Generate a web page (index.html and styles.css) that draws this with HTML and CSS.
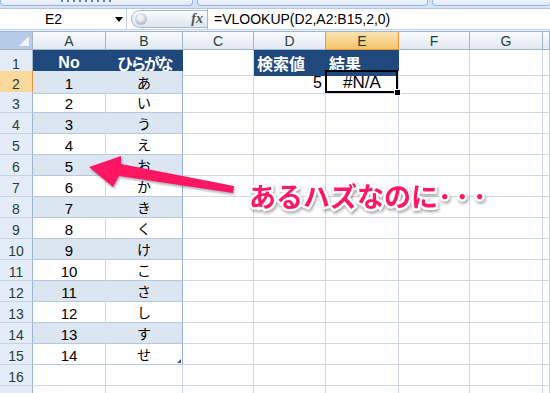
FILE: index.html
```html
<!DOCTYPE html>
<html lang="ja">
<head>
<meta charset="utf-8">
<link rel="stylesheet" href="styles.css">
</head>
<body>
<div class="ribbon">
  <div class="rb rb1"><span class="dots"></span></div>
  <div class="rb rb2"></div>
  <div class="rb rb3"></div>
</div>
<div class="fbar">
  <div class="namebox"><span class="nm">E2</span><span class="dd"></span></div>
  <div class="pill"><span class="knob"></span><span class="fx">fx</span></div>
  <div class="formula">=VLOOKUP(D2,A2:B15,2,0)</div>
</div>
<div class="gap"></div>
<div class="sheet">
  <div class="row colhdr">
    <div class="corner"><span class="tri"></span></div>
    <div class="ch">A</div><div class="ch">B</div><div class="ch">C</div><div class="ch">D</div>
    <div class="ch hsel">E</div><div class="ch">F</div><div class="ch">G</div><div class="ch"></div>
  </div>
  <div class="row">
    <div class="rh">1</div>
    <div class="c th">No</div><div class="c th kana-h">ひらがな</div><div class="c"></div>
    <div class="c th left">検索値</div><div class="c th left">結果</div><div class="c"></div><div class="c"></div><div class="c"></div>
  </div>
  <div class="row">
    <div class="rh rsel">2</div>
    <div class="c ta band">1</div><div class="c tb band">あ</div><div class="c"></div>
    <div class="c num">5</div><div class="c active">#N/A</div><div class="c"></div><div class="c"></div><div class="c"></div>
  </div>
  <div class="row">
    <div class="rh">3</div>
    <div class="c ta">2</div><div class="c tb">い</div><div class="c"></div><div class="c"></div><div class="c"></div><div class="c"></div><div class="c"></div><div class="c"></div>
  </div>
  <div class="row">
    <div class="rh">4</div>
    <div class="c ta band">3</div><div class="c tb band">う</div><div class="c"></div><div class="c"></div><div class="c"></div><div class="c"></div><div class="c"></div><div class="c"></div>
  </div>
  <div class="row">
    <div class="rh">5</div>
    <div class="c ta">4</div><div class="c tb">え</div><div class="c"></div><div class="c"></div><div class="c"></div><div class="c"></div><div class="c"></div><div class="c"></div>
  </div>
  <div class="row">
    <div class="rh">6</div>
    <div class="c ta band">5</div><div class="c tb band">お</div><div class="c"></div><div class="c"></div><div class="c"></div><div class="c"></div><div class="c"></div><div class="c"></div>
  </div>
  <div class="row">
    <div class="rh">7</div>
    <div class="c ta">6</div><div class="c tb">か</div><div class="c"></div><div class="c"></div><div class="c"></div><div class="c"></div><div class="c"></div><div class="c"></div>
  </div>
  <div class="row">
    <div class="rh">8</div>
    <div class="c ta band">7</div><div class="c tb band">き</div><div class="c"></div><div class="c"></div><div class="c"></div><div class="c"></div><div class="c"></div><div class="c"></div>
  </div>
  <div class="row">
    <div class="rh">9</div>
    <div class="c ta">8</div><div class="c tb">く</div><div class="c"></div><div class="c"></div><div class="c"></div><div class="c"></div><div class="c"></div><div class="c"></div>
  </div>
  <div class="row">
    <div class="rh">10</div>
    <div class="c ta band">9</div><div class="c tb band">け</div><div class="c"></div><div class="c"></div><div class="c"></div><div class="c"></div><div class="c"></div><div class="c"></div>
  </div>
  <div class="row">
    <div class="rh">11</div>
    <div class="c ta">10</div><div class="c tb">こ</div><div class="c"></div><div class="c"></div><div class="c"></div><div class="c"></div><div class="c"></div><div class="c"></div>
  </div>
  <div class="row">
    <div class="rh">12</div>
    <div class="c ta band">11</div><div class="c tb band">さ</div><div class="c"></div><div class="c"></div><div class="c"></div><div class="c"></div><div class="c"></div><div class="c"></div>
  </div>
  <div class="row">
    <div class="rh">13</div>
    <div class="c ta">12</div><div class="c tb">し</div><div class="c"></div><div class="c"></div><div class="c"></div><div class="c"></div><div class="c"></div><div class="c"></div>
  </div>
  <div class="row">
    <div class="rh">14</div>
    <div class="c ta band">13</div><div class="c tb band">す</div><div class="c"></div><div class="c"></div><div class="c"></div><div class="c"></div><div class="c"></div><div class="c"></div>
  </div>
  <div class="row">
    <div class="rh">15</div>
    <div class="c ta">14</div><div class="c tb last">せ</div><div class="c"></div><div class="c"></div><div class="c"></div><div class="c"></div><div class="c"></div><div class="c"></div>
  </div>
  <div class="row">
    <div class="rh">16</div>
    <div class="c"></div><div class="c"></div><div class="c"></div><div class="c"></div><div class="c"></div><div class="c"></div><div class="c"></div><div class="c"></div>
  </div>
  <div class="row">
    <div class="rh"></div>
    <div class="c"></div><div class="c"></div><div class="c"></div><div class="c"></div><div class="c"></div><div class="c"></div><div class="c"></div><div class="c"></div>
  </div>
</div>
<svg class="arrow" width="550" height="393" viewBox="0 0 550 393">
  <polygon points="89,167 121,156 121,164 234,186 233,193 119,176 113,187" fill="#ff1662"/>
</svg>
<div class="callout">あるハズなのに<span class="dotset">･･･</span></div>
</body>
</html>
```

FILE: styles.css
```css
html, body {
  margin: 0;
  padding: 0;
  background: #ffffff;
  overflow: hidden;
  width: 550px;
  height: 393px;
}
body {
  font-family: "Liberation Sans", "Noto Sans CJK JP", sans-serif;
  position: relative;
}

/* ribbon strip */
.ribbon {
  height: 9px;
  background: #d4e2f3;
  display: flex;
  gap: 4px;
  box-sizing: border-box;
  padding-bottom: 2px;
  border-bottom: 1px solid #b3c7e1;
}
.rb {
  height: 100%;
  box-sizing: border-box;
  border: 1px solid #9db8dc;
  border-top: none;
  border-radius: 0 0 4px 4px;
  background: linear-gradient(#eef4fb, #dfe9f6);
  position: relative;
}
.rb1 { width: 193px; }
.rb2 { width: 231px; }
.rb3 { flex: 1; border-right: none; }
.dots {
  position: absolute;
  left: 60px;
  top: 0;
  width: 50px;
  height: 2px;
  background: repeating-linear-gradient(90deg, #5a80bd 0 2px, transparent 2px 6px);
}

/* formula bar */
.fbar {
  display: flex;
  height: 20px;
  background: #ffffff;
  border-bottom: 1px solid #c3d2e4;
}
.namebox {
  width: 127px;
  display: flex;
  align-items: center;
  box-sizing: border-box;
  border-right: 1px solid #c3d2e4;
}
.nm {
  flex: 1;
  text-align: center;
  font-size: 14px;
  color: #000;
  margin-left: -8px;
}
.dd {
  width: 0;
  height: 0;
  border-left: 4px solid transparent;
  border-right: 4px solid transparent;
  border-top: 5px solid #000;
  margin-right: 3px;
}
.pill {
  width: 76px;
  margin-left: 4px;
  margin-top: 1px;
  height: 18px;
  box-sizing: border-box;
  border: 1px solid #a5b9d2;
  border-right: none;
  border-radius: 10px 0 0 10px;
  background: linear-gradient(#fafcfe, #dbe5f1);
  display: flex;
  align-items: center;
  justify-content: space-between;
  padding: 0 4px 0 3px;
}
.knob {
  width: 12px;
  height: 12px;
  border-radius: 50%;
  background: radial-gradient(circle at 45% 40%, #f4f4f4 0 20%, #b7bcc3 70%, #9aa1aa 100%);
}
.fx {
  font-family: "Liberation Serif", serif;
  font-style: italic;
  font-weight: bold;
  font-size: 14px;
  color: #555;
}
.formula {
  flex: 1;
  border-left: 1px solid #a5b9d2;
  padding-left: 6px;
  font-size: 14px;
  line-height: 20px;
  color: #000;
  white-space: nowrap;
}
.gap {
  height: 1px;
  background: #eef2f7;
}

/* sheet */
.sheet {
  display: flex;
  flex-direction: column;
}
.row {
  display: grid;
  grid-template-columns: 33px 73px 77px 71px 72px 73px 71px 73px 1fr;
  height: 21px;
}
.row > div {
  box-sizing: border-box;
  display: flex;
  align-items: center;
  justify-content: center;
  overflow: visible;
  white-space: nowrap;
}
.colhdr {
  height: 18px;
  border-top: 1px solid #9eb6ce;
}
.corner {
  background: #b5cbe8;
  border-right: 1px solid #9eb6ce;
  border-bottom: 1px solid #9eb6ce;
  position: relative;
}
.tri {
  position: absolute;
  right: 3px;
  bottom: 3px;
  width: 0;
  height: 0;
  border-left: 10px solid transparent;
  border-bottom: 10px solid #f2f6fb;
}
.ch {
  background: linear-gradient(#f9fbfd, #e2e9f1);
  border-right: 1px solid #9eb6ce;
  border-bottom: 1px solid #9eb6ce;
  font-size: 14px;
  color: #27403d;
}
.ch.hsel {
  background: linear-gradient(#fae2b2, #f4c56c);
  border-right: 1px solid #f29536;
  border-left: 1px solid #f29536;
  border-bottom: 1px solid #f29536;
  margin-left: -1px;
}
.rh {
  background: #e4ecf7;
  border-right: 1px solid #9eb6ce;
  border-bottom: 1px solid #c5d3e4;
  font-size: 14px;
  color: #27403d;
  padding-top: 3px;
}
.rh.rsel {
  background: #f9d89c;
  border-right: 1px solid #f29536;
  border-bottom: 1px solid #f29536;
}
.c {
  border-right: 1px solid #d0d7e5;
  border-bottom: 1px solid #d0d7e5;
  font-size: 15px;
  color: #000;
  padding-top: 2px;
}
.c.th {
  background: #1f497d;
  color: #ffffff;
  font-weight: bold;
  font-size: 16px;
  border-right-color: #1f497d;
  border-bottom-color: #1f497d;
  padding-top: 1px;
}
.row > .c.left {
  justify-content: flex-start;
  padding-left: 3px;
}
.kana-h {
  letter-spacing: -2.5px;
}
.ta, .tb {
  border-bottom-color: #b8c9df;
}
.tb {
  font-size: 14px;
  font-family: "Noto Sans CJK JP", sans-serif;
  border-right-color: #95b3d7;
  padding-top: 0;
}
.ta.band {
  border-right-color: #dce6f1;
}
.band {
  background: #dce6f1;
}
.tb.last {
  position: relative;
}
.tb.last::after {
  content: "";
  position: absolute;
  right: 1px;
  bottom: 1px;
  width: 0;
  height: 0;
  border-left: 4px solid transparent;
  border-bottom: 4px solid #3e56a5;
}
.row > .c.num {
  justify-content: flex-end;
  padding-right: 3px;
  font-size: 16px;
}
.c.active {
  position: relative;
  font-size: 17px;
  z-index: 2;
}
.c.active::before {
  content: "";
  position: absolute;
  left: -1px;
  top: -1px;
  right: 0;
  bottom: 0;
  border: 2px solid #000;
}
.c.active::after {
  content: "";
  position: absolute;
  right: -3px;
  bottom: -3px;
  width: 5px;
  height: 5px;
  background: #000;
  border: 1px solid #fff;
}

/* overlays */
.arrow {
  position: absolute;
  left: 0;
  top: 0;
  pointer-events: none;
  filter: drop-shadow(1px 2px 1px rgba(0, 0, 0, 0.3));
}
.callout {
  position: absolute;
  left: 249px;
  top: 182px;
  font-family: "Noto Sans CJK JP", sans-serif;
  font-weight: bold;
  font-size: 27px;
  line-height: 1;
  color: #ff1664;
  letter-spacing: 0;
  -webkit-text-stroke: 5px #ffffff;
  paint-order: stroke fill;
  filter: drop-shadow(1px 2px 1.5px rgba(0, 0, 0, 0.35));
  white-space: nowrap;
}
.dotset {
  letter-spacing: 4px;
}
```
